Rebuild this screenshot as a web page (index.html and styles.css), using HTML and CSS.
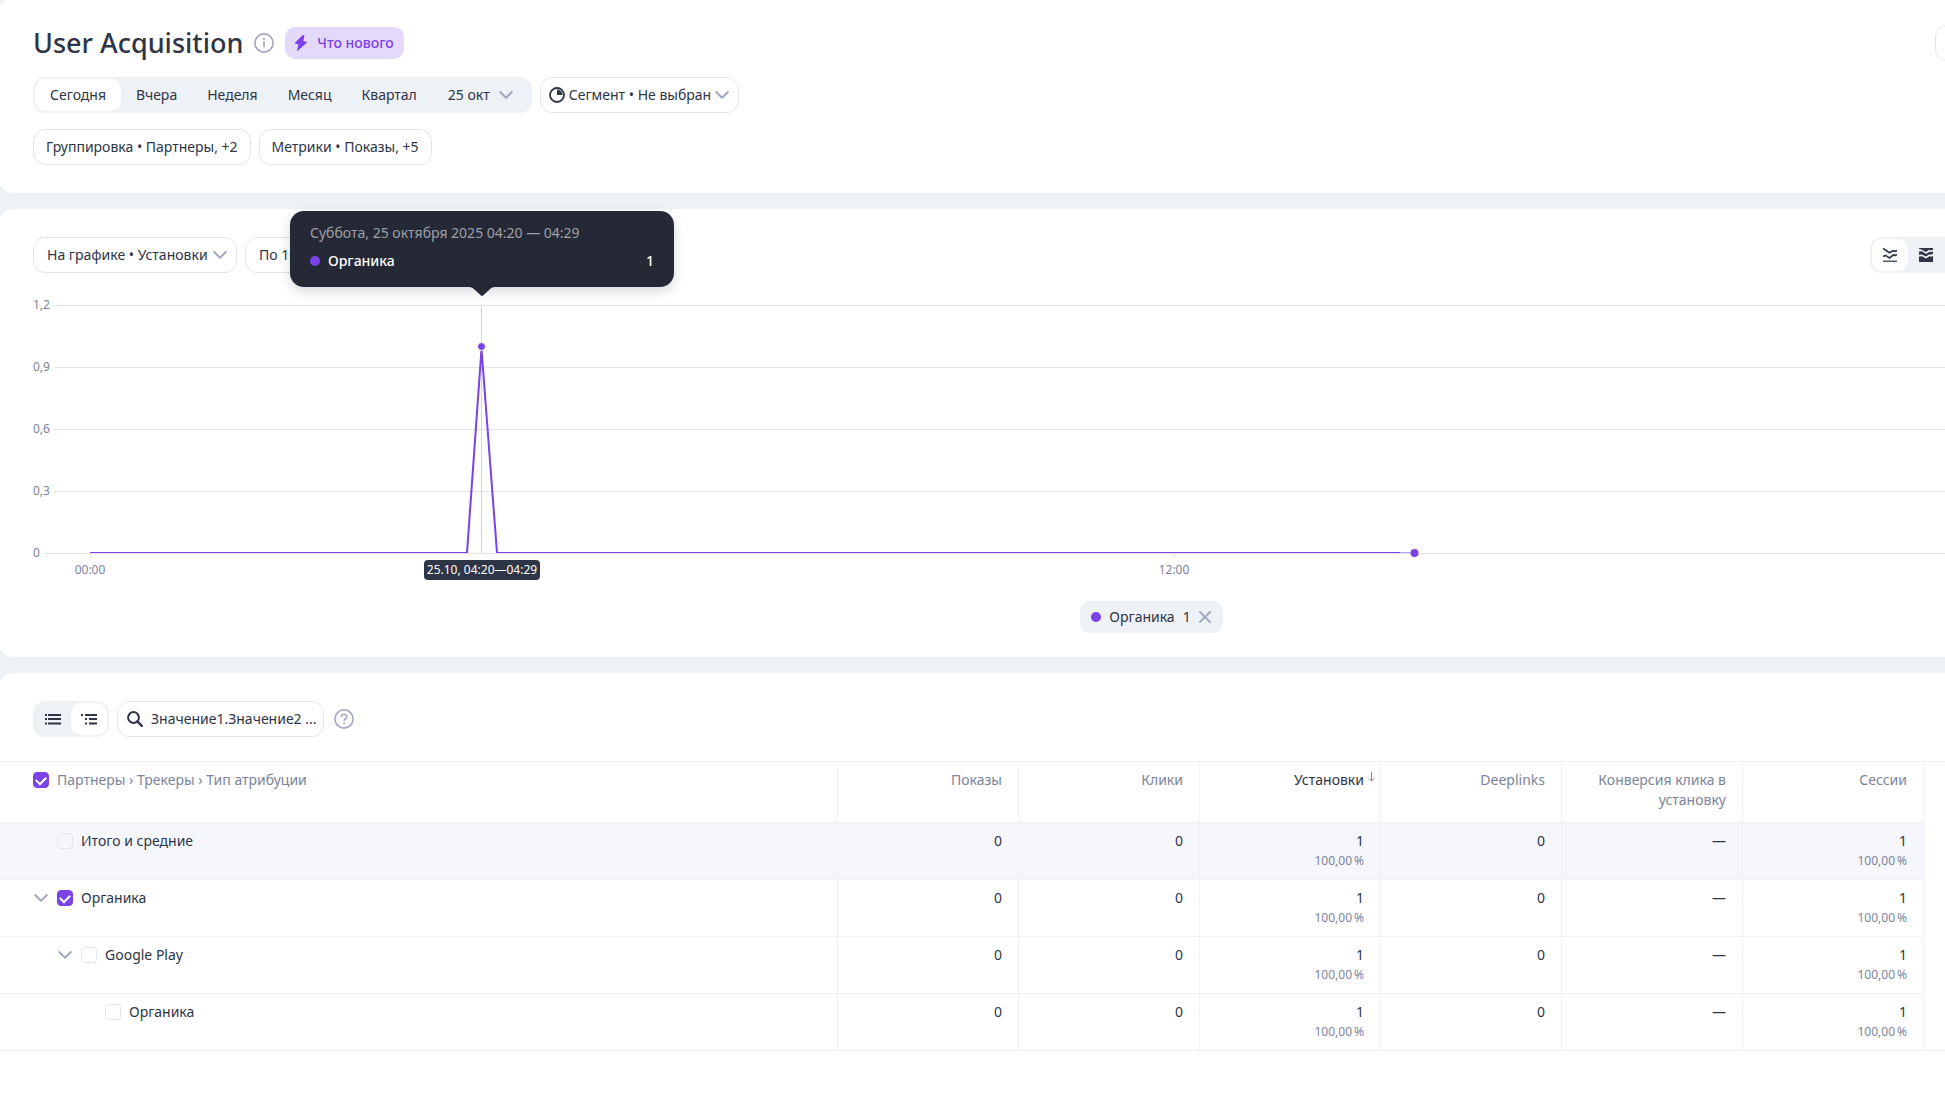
FILE: index.html
```html
<!DOCTYPE html>
<html lang="ru">
<head>
<meta charset="utf-8">
<meta name="viewport" content="width=device-width, initial-scale=1">
<title>User Acquisition</title>
<link rel="stylesheet" href="styles.css">
</head>
<body>
<svg class="sprite" aria-hidden="true">
  <symbol id="chevron" viewBox="0 0 16 16"><path d="M2.2 5 8 10.7 13.8 5" fill="none" stroke="currentColor" stroke-width="2" stroke-linecap="round" stroke-linejoin="round"/></symbol>
</svg>
<main class="page">
  <section class="card card-filters">
    <header class="bar bar-title">
      <div class="title-group">
        <h1 class="title">User Acquisition</h1>
        <button class="icon-button" type="button" aria-label="Информация">
          <svg class="icon-round" viewBox="0 0 20 20" aria-hidden="true"><circle cx="10" cy="10" r="9.1" fill="none" stroke="currentColor" stroke-width="1.6"/><circle cx="10" cy="6" r="1" fill="currentColor"/><path d="M10 8.2v6.4" stroke="currentColor" stroke-width="1.6"/></svg>
        </button>
        <button class="badge" type="button">
          <svg class="icon-bolt" viewBox="0 0 16 16" aria-hidden="true"><path d="M9.6.3 2.2 7.4c-.6.6-.4 1.3.4 1.4l2.8.6L4 15.4c-.1.5.4.7.7.3l8.9-7.6c.5-.5.4-1.1-.3-1.3l-3-.8L11.4.7c0-.6-1.3-.9-1.8-.4z" fill="currentColor"/></svg>
          Что нового
        </button>
      </div>
      <button class="field header-action" type="button" aria-label="Действия"></button>
    </header>

    <div class="bar">
      <div class="segmented" role="group" aria-label="Период">
        <button class="segment segment-active" type="button" aria-pressed="true">Сегодня</button>
        <button class="segment" type="button">Вчера</button>
        <button class="segment" type="button">Неделя</button>
        <button class="segment" type="button">Месяц</button>
        <button class="segment" type="button">Квартал</button>
        <button class="segment segment-date" type="button">25 окт <svg class="chevron" aria-hidden="true"><use href="#chevron"/></svg></button>
      </div>
      <div class="field dropdown dropdown-segment">
        <svg class="icon" viewBox="0 0 16 16" aria-hidden="true"><circle cx="8" cy="8" r="7" fill="none" stroke="currentColor" stroke-width="1.8"/><path d="M8 2.6V8h5.6A5.6 5.6 0 0 0 8 2.6z" fill="currentColor"/></svg>
        <select class="select" aria-label="Сегмент"><option>Сегмент • Не выбран</option></select>
        <svg class="chevron" aria-hidden="true"><use href="#chevron"/></svg>
      </div>
    </div>

    <div class="bar">
      <button class="field" type="button">Группировка • Партнеры, +2</button>
      <button class="field" type="button">Метрики • Показы, +5</button>
    </div>
  </section>

  <section class="card card-chart">
    <div class="bar bar-chart">
      <div class="title-group">
        <div class="field dropdown">
          <select class="select" aria-label="Метрика на графике"><option>На графике • Установки</option></select>
          <svg class="chevron" aria-hidden="true"><use href="#chevron"/></svg>
        </div>
        <div class="field dropdown">
          <select class="select" aria-label="Детализация"><option>По 10 минут</option></select>
          <svg class="chevron" aria-hidden="true"><use href="#chevron"/></svg>
        </div>
      </div>
      <div class="segmented chart-types" role="group" aria-label="Тип графика">
        <button class="segment segment-icon segment-active" type="button" aria-label="Линии" aria-pressed="true">
          <svg class="icon" viewBox="0 0 16 16" aria-hidden="true"><path d="M1 1.4 4.5 3.8 7.5 5.8 11 3.6 13 4.4 15 3.4M1 9.6 3.5 8.4 7.5 11 11.5 7.8 13 8.6 15 7.6" fill="none" stroke="currentColor" stroke-width="1.7"/><path d="M1 14.2h14" stroke="currentColor" stroke-width="1.2"/></svg>
        </button>
        <button class="segment segment-icon" type="button" aria-label="Области">
          <svg class="icon" viewBox="0 0 16 16" aria-hidden="true"><path d="M1 1h14v1.6l-2.2.9-1.8-.7L8 4.9 4.4 3 1 1.8z" fill="currentColor"/><path d="M1 4.4 4 4.2 8 7 11.5 4.8l1.5.5 2-.8v2.3l-2 1-1.5-.5L8 9.6 4 7.6 1 7.8z" fill="currentColor"/><path d="m1 9.6 3-.3 4 2.3 3.5-2.4 1.5.6 2-.9V15H1z" fill="currentColor"/></svg>
        </button>
      </div>
    </div>

    <div class="chart">
      <svg class="plot" role="img" aria-label="Установки за 25 октября">
        <clipPath id="plot-area"><rect width="2235" height="258"/></clipPath>
        <g class="grid-lines">
          <path d="M21 10.5H2235M21 72.5H2235M21 134.5H2235M21 196.5H2235M11 258.5H2235"/>
          <path d="M57.5 259v4M1141.5 259v4"/>
        </g>
        <g class="axis-text">
          <text x="0" y="14">1,2</text>
          <text x="0" y="76">0,9</text>
          <text x="0" y="138">0,6</text>
          <text x="0" y="200">0,3</text>
          <text x="0" y="262">0</text>
          <text x="57" y="279" text-anchor="middle">00:00</text>
          <text x="1141" y="279" text-anchor="middle">12:00</text>
        </g>
        <path class="cursor" d="M448.5 10V258"/>
        <g clip-path="url(#plot-area)">
          <path class="series" d="M57 258H434L448.500 54 464 258H1367"/>
          <path class="series series-partial" d="M1367 258h14"/>
        </g>
        <circle class="marker" cx="448.5" cy="51.5" r="4"/>
        <circle class="point" cx="1381.5" cy="258" r="4"/>
      </svg>
      <div class="tooltip" role="tooltip">
        <div class="tooltip-date">Суббота, 25 октября 2025 04:20 — 04:29</div>
        <div class="tooltip-row"><span class="dot"></span><span>Органика</span><span class="tooltip-value">1</span></div>
        <svg class="tooltip-arrow" viewBox="0 0 28 10" aria-hidden="true"><path d="M0 0h28c-4 0-5 1-7 3l-6 5.500q-1 .8-2 0L7 3C5 1 4 0 0 0z" fill="currentColor"/></svg>
      </div>
      <div class="cursor-label">25.10, 04:20—04:29</div>
    </div>

    <div class="legend">
      <button class="legend-item" type="button"><span class="dot"></span><span>Органика</span><span>1</span>
        <svg class="icon-close" viewBox="0 0 12 12" aria-hidden="true"><path d="m1 1 10 10M11 1 1 11" stroke="currentColor" stroke-width="1.8" stroke-linecap="round"/></svg>
      </button>
    </div>
  </section>

  <section class="card card-table">
    <div class="bar bar-table">
      <div class="segmented" role="group" aria-label="Вид таблицы">
        <button class="segment segment-icon" type="button" aria-label="Список">
          <svg class="icon" viewBox="0 0 16 16" aria-hidden="true"><path d="M3 4h13M3 8h13M3 12.500h13M0 4h2M0 8h2M0 12.500h2" stroke="currentColor" stroke-width="2"/></svg>
        </button>
        <button class="segment segment-icon segment-active" type="button" aria-label="Дерево" aria-pressed="true">
          <svg class="icon" viewBox="0 0 16 16" aria-hidden="true"><path d="M4 4h12M8 8h8M8 12.500h8M0 4h2M4 8h2M4 12.500h2" stroke="currentColor" stroke-width="2"/></svg>
        </button>
      </div>
      <label class="field search">
        <svg class="icon" viewBox="0 0 16 16" aria-hidden="true"><circle cx="6.500" cy="6.500" r="5.400" fill="none" stroke="currentColor" stroke-width="2"/><path d="m10.600 10.600 4.200 4.200" stroke="currentColor" stroke-width="2.400" stroke-linecap="round"/></svg>
        <input class="search-input" type="text" placeholder="Значение1.Значение2 ..." aria-label="Поиск">
      </label>
      <button class="icon-button" type="button" aria-label="Справка">
        <svg class="icon-round" viewBox="0 0 20 20" aria-hidden="true"><circle cx="10" cy="10" r="9.1" fill="none" stroke="currentColor" stroke-width="1.6"/><path d="M7.200 8c0-3.600 5.800-3.500 5.700-.2 0 2-2.700 1.900-2.800 4" fill="none" stroke="currentColor" stroke-width="1.600"/><circle cx="10.100" cy="14.300" r="1" fill="currentColor"/></svg>
      </button>
    </div>

    <div class="table-wrap">
      <table class="table">
        <colgroup><col class="col-name"><col span="6"></colgroup>
        <thead>
          <tr>
            <th scope="col"><div class="tree"><label class="check"><input type="checkbox" checked>Партнеры › Трекеры › Тип атрибуции</label></div></th>
            <th scope="col">Показы</th>
            <th scope="col">Клики</th>
            <th class="sorted" scope="col" aria-sort="descending">Установки<svg class="sort-arrow" viewBox="0 0 7 10" aria-hidden="true"><path d="M3.500 0v9M1 6.500l2.500 2.500L6 6.500" fill="none" stroke="currentColor"/></svg></th>
            <th scope="col">Deeplinks</th>
            <th scope="col">Конверсия клика в установку</th>
            <th scope="col">Сессии</th>
          </tr>
        </thead>
        <tbody>
          <tr class="total">
            <td><div class="tree level-1"><label class="check"><input type="checkbox">Итого и средние</label></div></td>
            <td>0</td><td>0</td><td>1<div class="share">100,00&thinsp;%</div></td><td>0</td><td>—</td><td>1<div class="share">100,00&thinsp;%</div></td>
          </tr>
          <tr>
            <td><div class="tree"><button class="toggle" type="button" aria-label="Свернуть"><svg class="chevron" aria-hidden="true"><use href="#chevron"/></svg></button><label class="check"><input type="checkbox" checked>Органика</label></div></td>
            <td>0</td><td>0</td><td>1<div class="share">100,00&thinsp;%</div></td><td>0</td><td>—</td><td>1<div class="share">100,00&thinsp;%</div></td>
          </tr>
          <tr>
            <td><div class="tree level-1"><button class="toggle" type="button" aria-label="Свернуть"><svg class="chevron" aria-hidden="true"><use href="#chevron"/></svg></button><label class="check"><input type="checkbox">Google Play</label></div></td>
            <td>0</td><td>0</td><td>1<div class="share">100,00&thinsp;%</div></td><td>0</td><td>—</td><td>1<div class="share">100,00&thinsp;%</div></td>
          </tr>
          <tr>
            <td><div class="tree level-3"><label class="check"><input type="checkbox">Органика</label></div></td>
            <td>0</td><td>0</td><td>1<div class="share">100,00&thinsp;%</div></td><td>0</td><td>—</td><td>1<div class="share">100,00&thinsp;%</div></td>
          </tr>
        </tbody>
      </table>
    </div>
  </section>
</main>
</body>
</html>
```
FILE: styles.css
```css
:root {
  --text: #2e3547;
  --muted: #7c849b;
  --icon: #a0a9c0;
  --line: #e3e4ee;
  --table-line: #eef1f6;
  --surface: #eef1f6;
  --accent: #7b43e5;
}

* { box-sizing: border-box; }

body {
  margin: 0;
  overflow: hidden;
  background: var(--surface);
  color: var(--text);
  font: 14px/20px "Noto Sans", "Open Sans", sans-serif;
}

button, input, select {
  margin: 0;
  padding: 0;
  border: 0;
  background: none;
  color: inherit;
  font: inherit;
}

button { cursor: pointer; }

.sprite { display: none; }

/* The report is wider than the window and is cut off on the right. */
.page {
  display: flex;
  flex-direction: column;
  gap: 16px;
  width: calc(100% + 362px);
  min-height: calc(100vh + 24px);
  margin: -2px 0 0 -2px;
}

.card {
  background: #fff;
  border-radius: 16px;
  padding: 28px 35px;
}

.card-filters {
  display: flex;
  flex-direction: column;
  gap: 16px;
  padding-top: 27px;
}

.card-chart { padding-bottom: 24px; }

.card-table {
  flex: 1;
  padding-left: 0;
  padding-right: 0;
}

.bar {
  display: flex;
  align-items: center;
  gap: 8px;
}

.bar-title, .bar-chart { justify-content: space-between; }

.bar-table { padding: 0 35px 24px; }

.title-group {
  display: flex;
  align-items: center;
  gap: 8px;
}

.bar-title .title-group { gap: 11px; }

.title {
  margin: 0;
  font-size: 27px;
  line-height: 36px;
  font-weight: 500;
}

.icon { flex: none; width: 16px; height: 16px; }
.icon-round { display: block; width: 20px; height: 20px; }
.icon-bolt { width: 16px; height: 16px; }
.icon-close { width: 12px; height: 12px; color: var(--icon); }
.chevron { flex: none; display: block; width: 16px; height: 16px; color: var(--icon); }

.icon-button { color: var(--icon); }
.bar-table .icon-button { margin-left: 2px; }

.badge {
  display: flex;
  align-items: center;
  gap: 8px;
  height: 32px;
  padding: 0 10px 0 8px;
  border-radius: 10px;
  background: #e4d9fa;
  color: var(--accent);
  font-weight: 500;
}

.field {
  height: 36px;
  padding: 0 12px;
  border: 1px solid var(--line);
  border-radius: 12px;
  background: #fff;
}

.header-action { width: 335px; }

.dropdown { display: flex; align-items: center; padding: 0; }
.dropdown > .chevron { margin-left: -24px; margin-right: 8px; pointer-events: none; }
.dropdown > .icon { margin: 0 -24px 0 8px; pointer-events: none; }

.select {
  appearance: none;
  height: 34px;
  padding: 0 28px 0 13px;
  border-radius: 12px;
}

.dropdown-segment .select { padding: 0 26px 0 28px; }

.segmented {
  display: flex;
  height: 36px;
  padding: 2px;
  border-radius: 12px;
  background: var(--surface);
}

.segment {
  display: flex;
  align-items: center;
  justify-content: center;
  height: 32px;
  padding: 0 15px;
  border-radius: 10px;
}

.segment-active { background: #fff; }
.segment-icon { width: 36px; padding: 0; }
.segment-date { gap: 8px; padding: 0 16px; }
.chart-types { width: 400px; }

.chart {
  position: relative;
  height: 300px;
  margin-top: 22px;
}

.plot { display: block; width: 100%; height: 100%; overflow: visible; }
.grid-lines { stroke: var(--line); }
.axis-text { fill: var(--muted); font-size: 12px; }
.cursor { stroke: #d3d4df; }
.series { fill: none; stroke: var(--accent); stroke-width: 2; stroke-linejoin: bevel; }
.series-partial { opacity: 0.5; }
.point, .marker { fill: var(--accent); }
.marker { stroke: #fff; }

.tooltip {
  position: absolute;
  left: 257px;
  top: -84px;
  width: 384px;
  padding: 12px 20px 16px;
  border-radius: 14px;
  background: #252936;
  color: #fff;
  box-shadow: 0 4px 12px rgba(46, 53, 71, 0.2);
}

.tooltip-date { color: #9d9fa6; }
.tooltip-row { display: flex; align-items: center; gap: 8px; margin-top: 8px; font-weight: 500; }
.tooltip-value { margin-left: auto; }

.tooltip-arrow {
  position: absolute;
  top: 100%;
  left: 50%;
  width: 28px;
  height: 10px;
  margin-left: -14px;
  color: #252936;
}

.cursor-label {
  position: absolute;
  left: 391px;
  top: 265px;
  width: 116px;
  border-radius: 4px;
  background: var(--text);
  color: #fff;
  font-size: 12px;
  text-align: center;
  white-space: nowrap;
}

.dot { flex: none; width: 10px; height: 10px; border-radius: 50%; background: var(--accent); }

.legend { display: flex; justify-content: center; margin-top: 6px; }

.legend-item {
  display: flex;
  align-items: center;
  gap: 8px;
  height: 32px;
  padding: 0 12px 0 11px;
  border-radius: 10px;
  background: var(--surface);
}

.search { display: flex; align-items: center; gap: 8px; width: 207px; padding: 0 4px 0 9px; }
.search-input { flex: 1; min-width: 0; outline: 0; }
.search-input::placeholder { color: var(--text); opacity: 1; }

.table-wrap { border: 1px solid var(--table-line); border-width: 1px 0; }

.table {
  table-layout: fixed;
  width: 1926px;
  border-collapse: separate;
  border-spacing: 0;
}

.col-name { width: 840px; }

.table th, .table td {
  padding: 8px 16px;
  border-right: 1px solid var(--table-line);
  border-bottom: 1px solid var(--table-line);
  text-align: right;
  vertical-align: top;
  font-weight: 400;
}

.table th { padding-bottom: 12px; color: var(--muted); }
.table tbody tr:last-child td { border-bottom: 0; }
.table .total td { background: #f6f7fc; }
.table th:first-child, .table td:first-child { padding-left: 35px; text-align: left; }
.table .sorted { color: var(--text); }

.sort-arrow {
  width: 7px;
  height: 10px;
  margin: 0 -11px 3px 4px;
  color: var(--muted);
}

.share { color: var(--muted); font-size: 12px; }

.tree { display: flex; align-items: center; gap: 8px; }
.level-1 { padding-left: 24px; }
.level-3 { padding-left: 72px; }

.toggle { width: 16px; height: 16px; }

.check { display: flex; align-items: center; gap: 8px; }

.check input {
  appearance: none;
  display: grid;
  place-items: center;
  flex: none;
  width: 16px;
  height: 16px;
  border: 1px solid var(--line);
  border-radius: 4px;
}

.check input:checked { border-color: var(--accent); background: var(--accent); }

.check input:checked::after {
  content: "";
  width: 8px;
  height: 5px;
  margin-bottom: 2px;
  border: solid #fff;
  border-width: 0 0 2px 2px;
  transform: rotate(-45deg);
}
```
